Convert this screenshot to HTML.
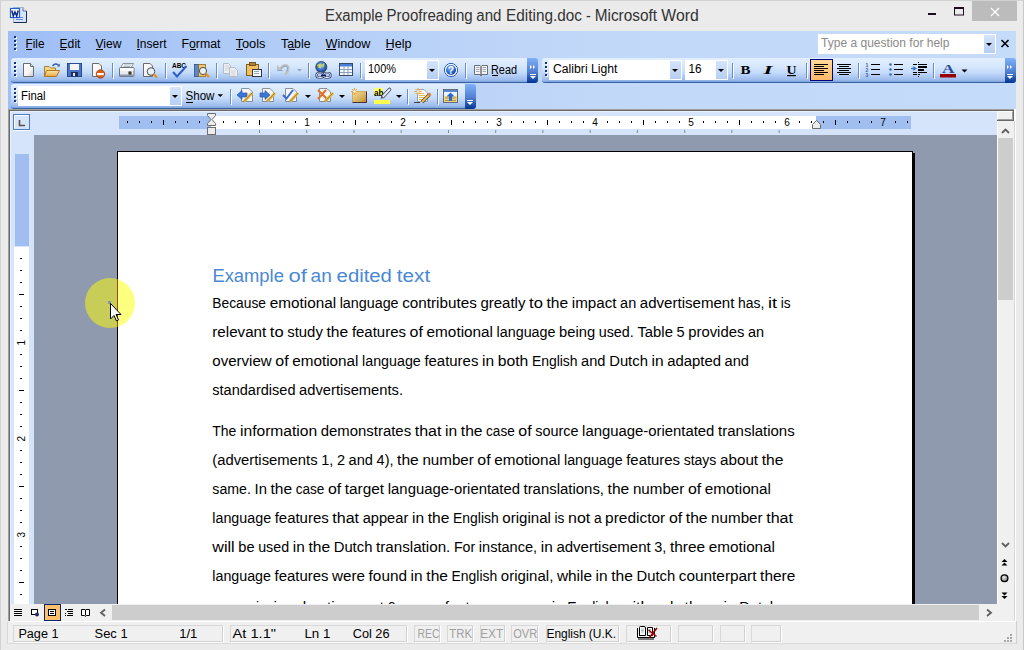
<!DOCTYPE html>
<html><head><meta charset="utf-8">
<style>
*{box-sizing:border-box}
html,body{margin:0;padding:0}
body{width:1024px;height:650px;position:relative;overflow:hidden;background:#ebebeb;font-family:"Liberation Sans",sans-serif;color:#000}
.a{position:absolute}
.tb{position:absolute;border-radius:3px 0 0 3px;background:linear-gradient(#e3efff 0%,#d6e7fd 35%,#c4dbfa 60%,#9ebdee 90%,#7ba4e0 100%);box-shadow:0 1px 0 #3b619c}
.sep{position:absolute;width:2px;height:16px;border-left:1px solid #6a8ccb;border-right:1px solid #f1f9ff}
.ovf{position:absolute;border-radius:0 3px 3px 0;background:linear-gradient(#7fb1fa,#527fd0 55%,#003591)}
.combo{position:absolute;background:#fff;border:1px solid #fff}

.arr{position:absolute;width:0;height:0;border-left:3px solid transparent;border-right:3px solid transparent;border-top:3px solid #000}
svg{position:absolute;overflow:visible}
.ui{font-family:"Liberation Sans",sans-serif;font-size:12px}
</style></head><body>
<!-- window frame -->
<div class="a" style="left:0;top:0;width:1024px;height:650px;border:1px solid #d2d2d2;border-bottom:none;border-right-color:#c8c8c8"></div>
<!-- title -->
<svg style="left:0;top:0" width="40" height="31">
 <path d="M13.5 7.5 H23 L26.5 11 V22.5 H13.5 Z" fill="#d4e4fa" stroke="#a8b8d0"/><path d="M26.5 11 V22.5 H13.5" fill="none" stroke="#1c2c58"/>
 <path d="M23 7.5 V11 H26.5" fill="#f0f0f0" stroke="#4a5a78" stroke-width="0.8"/>
 <path d="M16 17.5 H23 M16 19.5 H23" stroke="#6a8cd0" stroke-width="1"/>
 <rect x="10.5" y="8.5" width="9" height="9" fill="#fff" stroke="#2a60c8" stroke-width="1.2"/>
 <path d="M11.8 10.5 L13.3 16 L15 12 L16.7 16 L18.2 10.5" fill="none" stroke="#0c2a88" stroke-width="1.5"/>
</svg>
<svg style="left:0;top:0" width="1024" height="31">
 <g font-family="Liberation Sans" font-size="15.8" fill="#333"><text x="325.0" y="21" textLength="57.8" lengthAdjust="spacingAndGlyphs">Example</text><text x="386.5" y="21" textLength="86.2" lengthAdjust="spacingAndGlyphs">Proofreading</text><text x="476.3" y="21" textLength="25.1" lengthAdjust="spacingAndGlyphs">and</text><text x="506.1" y="21" textLength="75.8" lengthAdjust="spacingAndGlyphs">Editing.doc</text><text x="586.1" y="21" textLength="4.8" lengthAdjust="spacingAndGlyphs">-</text><text x="594.7" y="21" textLength="62.4" lengthAdjust="spacingAndGlyphs">Microsoft</text><text x="661.3" y="21" textLength="37.4" lengthAdjust="spacingAndGlyphs">Word</text></g>
 <rect x="928" y="13" width="8" height="2" fill="#1e0c1e"/>
 <rect x="954.5" y="7.5" width="9" height="7.5" fill="none" stroke="#1e0c1e" stroke-width="1"/>
 <rect x="954" y="7" width="10" height="2" fill="#1e0c1e"/>
 <rect x="972" y="1" width="45" height="20" fill="#bcbcbc"/>
 <path d="M991 8 L999 16 M999 8 L991 16" stroke="#fff" stroke-width="1.3"/>
</svg>
<!-- dock -->
<div class="a" style="left:8px;top:31px;width:1008px;height:78px;background:linear-gradient(90deg,#9ebef5 0%,#b4cef7 30%,#c2d8f9 58%,#c5dbfa 100%)"></div>
<!-- menubar -->
<svg style="left:0;top:0" width="1024" height="110"><rect x="15" y="37" width="2" height="2" fill="#fff"/><rect x="14" y="36" width="2" height="2" fill="#15307e"/><rect x="15" y="41" width="2" height="2" fill="#fff"/><rect x="14" y="40" width="2" height="2" fill="#15307e"/><rect x="15" y="45" width="2" height="2" fill="#fff"/><rect x="14" y="44" width="2" height="2" fill="#15307e"/><rect x="15" y="49" width="2" height="2" fill="#fff"/><rect x="14" y="48" width="2" height="2" fill="#15307e"/></svg>

<!-- menubar text -->
<svg style="left:0;top:0" width="1024" height="110" font-family="Liberation Sans" font-size="12.3" fill="#000">
 <text x="25.5" y="48" textLength="19" lengthAdjust="spacingAndGlyphs">File</text>
 <text x="59.5" y="48" textLength="21" lengthAdjust="spacingAndGlyphs">Edit</text>
 <text x="95.5" y="48" textLength="26" lengthAdjust="spacingAndGlyphs">View</text>
 <text x="136.5" y="48" textLength="30" lengthAdjust="spacingAndGlyphs">Insert</text>
 <text x="181.5" y="48" textLength="39" lengthAdjust="spacingAndGlyphs">Format</text>
 <text x="235.5" y="48" textLength="30" lengthAdjust="spacingAndGlyphs">Tools</text>
 <text x="281" y="48" textLength="29.5" lengthAdjust="spacingAndGlyphs">Table</text>
 <text x="325.5" y="48" textLength="45" lengthAdjust="spacingAndGlyphs">Window</text>
 <text x="385.5" y="48" textLength="26" lengthAdjust="spacingAndGlyphs">Help</text>
 <g fill="#000">
  <rect x="26" y="49" width="6" height="1"/>
  <rect x="60" y="49" width="6" height="1"/>
  <rect x="96" y="49" width="7" height="1"/>
  <rect x="137" y="49" width="3" height="1"/>
  <rect x="190" y="49" width="6" height="1"/>
  <rect x="236" y="49" width="7" height="1"/>
  <rect x="289" y="49" width="6" height="1"/>
  <rect x="326" y="49" width="10" height="1"/>
  <rect x="386" y="49" width="7" height="1"/>
 </g>
</svg>
<!-- help box -->
<div class="a" style="left:818px;top:34px;width:178px;height:20px;background:#fff"></div>
<div class="a" style="left:984px;top:35px;width:11px;height:18px;background:linear-gradient(#d4e5fc,#b4cef3)"></div>
<div class="arr" style="left:986px;top:43px;border-width:3px 3px 0 3px;border-top-color:#000"></div>
<svg style="left:0;top:0" width="1024" height="60">
 <text x="821" y="46.8" font-family="Liberation Sans" font-size="12.3" fill="#8a8a8a" textLength="128.5" lengthAdjust="spacingAndGlyphs">Type a question for help</text>
 <path d="M1001.5 40 L1008.5 47 M1008.5 40 L1001.5 47" stroke="#000" stroke-width="1.6"/>
</svg>

<!-- toolbars -->
<div class="tb" style="left:11px;top:58px;width:516px;height:24px"></div>
<div class="ovf" style="left:527px;top:58px;width:11px;height:25px"></div>
<div class="tb" style="left:542px;top:58px;width:463px;height:24px"></div>
<div class="ovf" style="left:1005px;top:58px;width:11px;height:25px"></div>
<div class="tb" style="left:11px;top:84px;width:454px;height:24px"></div>
<div class="ovf" style="left:465px;top:84px;width:11px;height:25px"></div>
<svg style="left:0;top:0" width="1024" height="110"><rect x="15" y="63" width="2" height="2" fill="#fff"/><rect x="14" y="62" width="2" height="2" fill="#15307e"/><rect x="15" y="67" width="2" height="2" fill="#fff"/><rect x="14" y="66" width="2" height="2" fill="#15307e"/><rect x="15" y="71" width="2" height="2" fill="#fff"/><rect x="14" y="70" width="2" height="2" fill="#15307e"/><rect x="15" y="75" width="2" height="2" fill="#fff"/><rect x="14" y="74" width="2" height="2" fill="#15307e"/></svg>
<svg style="left:0;top:0" width="1024" height="110"><rect x="546" y="63" width="2" height="2" fill="#fff"/><rect x="545" y="62" width="2" height="2" fill="#15307e"/><rect x="546" y="67" width="2" height="2" fill="#fff"/><rect x="545" y="66" width="2" height="2" fill="#15307e"/><rect x="546" y="71" width="2" height="2" fill="#fff"/><rect x="545" y="70" width="2" height="2" fill="#15307e"/><rect x="546" y="75" width="2" height="2" fill="#fff"/><rect x="545" y="74" width="2" height="2" fill="#15307e"/></svg>
<svg style="left:0;top:0" width="1024" height="110"><rect x="15" y="89" width="2" height="2" fill="#fff"/><rect x="14" y="88" width="2" height="2" fill="#15307e"/><rect x="15" y="93" width="2" height="2" fill="#fff"/><rect x="14" y="92" width="2" height="2" fill="#15307e"/><rect x="15" y="97" width="2" height="2" fill="#fff"/><rect x="14" y="96" width="2" height="2" fill="#15307e"/><rect x="15" y="101" width="2" height="2" fill="#fff"/><rect x="14" y="100" width="2" height="2" fill="#15307e"/></svg>

<!-- standard toolbar icons -->
<svg style="left:0;top:0" width="1024" height="110">
 <defs>
  <linearGradient id="pg" x1="0" y1="0" x2="1" y2="1"><stop offset="0" stop-color="#fff"/><stop offset="0.6" stop-color="#f4f4f4"/><stop offset="1" stop-color="#c8c8c8"/></linearGradient>
  <linearGradient id="fold" x1="0" y1="0" x2="0" y2="1"><stop offset="0" stop-color="#ffe9a0"/><stop offset="1" stop-color="#e8a64a"/></linearGradient>
  <linearGradient id="sep" x1="0" y1="0" x2="0" y2="1"><stop offset="0" stop-color="#6a8ccb" stop-opacity="0.2"/><stop offset="0.5" stop-color="#6a8ccb"/><stop offset="1" stop-color="#6a8ccb" stop-opacity="0.6"/></linearGradient>
  <radialGradient id="help" cx="0.4" cy="0.35" r="0.7"><stop offset="0" stop-color="#8ab8f8"/><stop offset="0.6" stop-color="#2a6ad0"/><stop offset="1" stop-color="#0c3c9c"/></radialGradient>
  <radialGradient id="globe" cx="0.45" cy="0.4" r="0.7"><stop offset="0" stop-color="#a8d8f8"/><stop offset="0.45" stop-color="#3a78d0"/><stop offset="1" stop-color="#1a2a58"/></radialGradient>
 </defs>
 <!-- separators row1 -->
 <g fill="#6a8ccb">
  <rect x="112" y="63" width="1" height="15"/><rect x="165" y="63" width="1" height="15"/><rect x="216" y="63" width="1" height="15"/>
  <rect x="268" y="63" width="1" height="15"/><rect x="308" y="63" width="1" height="15"/><rect x="360" y="63" width="1" height="15"/>
  <rect x="465" y="63" width="1" height="15"/>
  <rect x="732" y="63" width="1" height="15"/><rect x="806" y="63" width="1" height="15"/><rect x="858" y="63" width="1" height="15"/><rect x="933" y="63" width="1" height="15"/>
  <rect x="230" y="89" width="1" height="15"/><rect x="407" y="89" width="1" height="15"/><rect x="437" y="89" width="1" height="15"/>
 </g>
 <g fill="#fff">
  <rect x="113" y="64" width="1" height="15"/><rect x="166" y="64" width="1" height="15"/><rect x="217" y="64" width="1" height="15"/>
  <rect x="269" y="64" width="1" height="15"/><rect x="309" y="64" width="1" height="15"/><rect x="361" y="64" width="1" height="15"/>
  <rect x="466" y="64" width="1" height="15"/>
  <rect x="733" y="64" width="1" height="15"/><rect x="807" y="64" width="1" height="15"/><rect x="859" y="64" width="1" height="15"/><rect x="934" y="64" width="1" height="15"/>
  <rect x="231" y="90" width="1" height="15"/><rect x="408" y="90" width="1" height="15"/><rect x="438" y="90" width="1" height="15"/>
 </g>
 <!-- new -->
 <path d="M23.5 63.5 H30.5 L33.5 66.5 V76.5 H23.5 Z" fill="url(#pg)" stroke="#6c6c6c"/>
 <path d="M30.5 63.5 V66.5 H33.5" fill="#e0e0e0" stroke="#6c6c6c"/>
 <!-- open -->
 <path d="M44.5 66.5 H49 L50.5 68 H55.5 V76.5 H44.5 Z" fill="#f8d878" stroke="#a08040"/>
 <path d="M46.5 70.5 H59.5 L56.5 76.5 H44.5 Z" fill="url(#fold)" stroke="#b07828"/>
 <path d="M52.5 66 Q55 62.5 58.5 65" fill="none" stroke="#3a5fa8" stroke-width="1.3"/>
 <path d="M57 66.5 L60 66.5 L59.5 63.5 Z" fill="#3a5fa8"/>
 <!-- save -->
 <rect x="67.5" y="63.5" width="14" height="13" fill="#4a74c8" stroke="#2a4a98"/>
 <rect x="70" y="64" width="9" height="6" fill="#f4f4f4"/>
 <rect x="71" y="72" width="7" height="4.5" fill="#1c2c58"/>
 <rect x="73" y="73" width="2" height="3" fill="#e8e8e8"/>
 <!-- permission -->
 <path d="M92.5 63.5 H99 L101.5 66 V76.5 H92.5 Z" fill="url(#pg)" stroke="#6c6c6c"/>
 <circle cx="100.5" cy="74" r="4.2" fill="#d86018" stroke="#9c3c10" stroke-width="0.8"/>
 <rect x="97.2" y="73" width="6.6" height="2.2" fill="#fff"/>
 <!-- print -->
 <path d="M123 63.5 H133.5 L131 68 H120.5 Z" fill="#f4f6f8" stroke="#808890" stroke-width="0.9"/>
 <path d="M124 65 H131 M123.2 66.5 H130" stroke="#a8b0b8" stroke-width="0.8"/>
 <path d="M119.5 68.5 Q119.5 67.5 120.5 67.5 H133 Q134 67.5 134 68.5 V76 Q134 76.5 133.5 76.5 H120 Q119.5 76.5 119.5 76 Z" fill="#e8ecf0" stroke="#606870" stroke-width="0.9"/>
 <rect x="120" y="68" width="13.5" height="3" fill="#fafcfe"/>
 <rect x="120" y="74.5" width="13.5" height="1.8" fill="#8a98b0"/>
 <rect x="128.5" y="71.5" width="3" height="3" fill="#181818"/>
 <rect x="129.5" y="72.5" width="1" height="1" fill="#f0a000"/>
 <!-- print preview -->
 <path d="M143.5 63.5 H150 L152.5 66 V76.5 H143.5 Z" fill="url(#pg)" stroke="#6c6c6c"/>
 <circle cx="151" cy="71.5" r="3.8" fill="#e8f0f8" stroke="#505050" stroke-width="1"/>
 <path d="M153.5 74 L157 77.5" stroke="#e88c20" stroke-width="2.2"/>
 <!-- spelling -->
 <text x="172" y="68" font-family="Liberation Sans" font-weight="bold" font-size="7" fill="#000" textLength="14" lengthAdjust="spacingAndGlyphs">ABC</text>
 <path d="M173 72 L177 76.5 L186.5 66" fill="none" stroke="#2f5ec8" stroke-width="2"/>
 <!-- research -->
 <rect x="194.5" y="64.5" width="4" height="12" fill="#5a86d0" stroke="#304f8c" stroke-width="0.8"/>
 <rect x="198.5" y="64.5" width="7" height="12" fill="#f0c870" stroke="#8a6828" stroke-width="0.8"/>
 <circle cx="203" cy="71" r="3.6" fill="#e8f0f8" stroke="#505050" stroke-width="1"/>
 <path d="M205.5 73.5 L209 77" stroke="#e88c20" stroke-width="2.2"/>
 <!-- copy disabled -->
 <path d="M223.5 63.5 H228.5 L230.5 65.5 V73.5 H223.5 Z" fill="#eef0f2" stroke="#b4bcc4"/>
 <path d="M229.5 67.5 H234.5 L237.5 70.5 V76.5 H229.5 Z" fill="#eef0f2" stroke="#b4bcc4"/>
 <path d="M225 66 H229 M225 68 H229 M225 70 H228 M231 71 H235.5 M231 73 H235.5 M231 75 H235.5" stroke="#c4ccd4" stroke-width="0.8"/>
 <!-- paste -->
 <rect x="246.5" y="64.5" width="12" height="11" fill="#f0c060" stroke="#806020"/>
 <rect x="249.5" y="62.5" width="6" height="3" fill="#b08030" stroke="#604010" stroke-width="0.8"/>
 <rect x="252.5" y="69.5" width="9" height="7" fill="#f4f6f8" stroke="#303848"/>
 <path d="M254 71.5 H259 M254 73.5 H259" stroke="#8aa0b8" stroke-width="0.9"/>
 <!-- undo disabled -->
 <path d="M280 69.5 Q283 64.5 286.5 65.5 Q289.5 67 287.5 71.5 L285 75" fill="none" stroke="#c0c4bc" stroke-width="2.6"/>
 <path d="M280 69.5 Q283 65.5 286.5 66 Q288.5 67.5 286.8 71.5" fill="none" stroke="#88a4cc" stroke-width="1"/>
 <path d="M277 65 V71 H283 Z" fill="#bcc4bc"/><path d="M277.5 70.5 H282.5" stroke="#88a4cc" stroke-width="1"/>
 <path d="M297 69 H302 L299.5 71.5 Z" fill="#9aa4b4"/>
 <!-- hyperlink -->
 <circle cx="321.3" cy="67" r="5.6" fill="url(#globe)" stroke="#283850" stroke-width="0.7"/>
 <path d="M317.5 65.5 L320 64.5 L319 67 L321 67.5 M322 64.5 L323 66 L324 63.5" stroke="#e8d830" stroke-width="1.3" fill="none"/>
 <rect x="316.5" y="73" width="7" height="4.5" rx="2.2" fill="none" stroke="#203060" stroke-width="2.2"/>
 <rect x="316.5" y="73" width="7" height="4.5" rx="2.2" fill="none" stroke="#e8eef4" stroke-width="1"/>
 <rect x="323.5" y="73" width="7" height="4.5" rx="2.2" fill="none" stroke="#203060" stroke-width="2.2"/>
 <rect x="323.5" y="73" width="7" height="4.5" rx="2.2" fill="none" stroke="#e8eef4" stroke-width="1"/>
 <rect x="321" y="74.6" width="5" height="1.5" fill="#101860"/>
 <!-- table -->
 <rect x="339.5" y="63.5" width="13" height="12" fill="#f8fafc" stroke="#3a4a64"/>
 <rect x="340" y="64" width="12" height="2.5" fill="#4a80d8"/>
 <path d="M344 66 V75 M348 66 V75 M340 69.5 H352 M340 72.5 H352" stroke="#8aa0c0" stroke-width="1"/>
 <!-- help -->
 <circle cx="451" cy="70" r="6.6" fill="#fff" stroke="#2a5cc0" stroke-width="1"/>
 <circle cx="451" cy="70" r="5" fill="url(#help)"/>
 <text x="447.8" y="74.3" font-family="Liberation Sans" font-weight="bold" font-size="10.5" fill="#fff">?</text>
 <!-- read -->
 <path d="M474.5 65.5 H480 L481 66.5 L482 65.5 H487.5 V74.5 H482 L481 75.5 L480 74.5 H474.5 Z" fill="#f2f4f4" stroke="#5c6470" stroke-width="0.9"/>
 <path d="M481 66.5 V76" stroke="#303848" stroke-width="1"/>
 <path d="M476 67.5 H479.5 M476 69.5 H479.5 M476 71.5 H479.5 M482.5 67.5 H486 M482.5 69.5 H486 M482.5 71.5 H486" stroke="#98a4b0" stroke-width="0.9"/>
 <text x="491" y="73.5" font-family="Liberation Sans" font-size="12.3" fill="#000" textLength="26" lengthAdjust="spacingAndGlyphs">Read</text>
 <rect x="492" y="75" width="6" height="1" fill="#000"/>
</svg>
<!-- zoom combo -->
<div class="a" style="left:365px;top:60px;width:74px;height:20px;background:#fff"></div>
<div class="a" style="left:427px;top:61px;width:11px;height:18px;background:linear-gradient(#d4e5fc,#b4cef3)"></div>
<div class="arr" style="left:429px;top:69px;border-width:3px 3px 0 3px"></div>
<svg style="left:0;top:0" width="1024" height="110"><text x="368" y="72.5" font-family="Liberation Sans" font-size="12.3" fill="#000" textLength="28" lengthAdjust="spacingAndGlyphs">100%</text></svg>

<!-- formatting toolbar -->
<div class="a" style="left:549px;top:60px;width:133px;height:20px;background:#fff"></div>
<div class="a" style="left:670px;top:61px;width:11px;height:18px;background:linear-gradient(#d4e5fc,#b4cef3)"></div>
<div class="arr" style="left:672px;top:69px;border-width:3px 3px 0 3px"></div>
<div class="a" style="left:685px;top:60px;width:43px;height:20px;background:#fff"></div>
<div class="a" style="left:716px;top:61px;width:11px;height:18px;background:linear-gradient(#d4e5fc,#b4cef3)"></div>
<div class="arr" style="left:718px;top:69px;border-width:3px 3px 0 3px"></div>
<div class="a" style="left:810px;top:59px;width:23px;height:22px;border:1px solid #000080;background:linear-gradient(#ffd898,#ffb868)"></div>
<svg style="left:0;top:0" width="1024" height="110">
 <text x="553" y="72.5" font-family="Liberation Sans" font-size="12.3" fill="#000" textLength="64.5" lengthAdjust="spacingAndGlyphs">Calibri Light</text>
 <text x="688.5" y="72.5" font-family="Liberation Sans" font-size="12.3" fill="#000" textLength="13" lengthAdjust="spacingAndGlyphs">16</text>
 <text x="740.5" y="74" font-family="Liberation Serif" font-weight="bold" font-size="12.5" fill="#000" textLength="10" lengthAdjust="spacingAndGlyphs">B</text>
 <text x="763.5" y="74" font-family="Liberation Serif" font-style="italic" font-weight="bold" font-size="12.5" fill="#000" textLength="9" lengthAdjust="spacingAndGlyphs">I</text>
 <text x="786.5" y="73.5" font-family="Liberation Serif" font-weight="bold" font-size="12" fill="#000" textLength="10" lengthAdjust="spacingAndGlyphs">U</text>
 <rect x="787" y="75" width="9" height="1.2" fill="#000"/>
 <g fill="#000">
  <rect x="814" y="64" width="14" height="1"/><rect x="814" y="66" width="10" height="1"/><rect x="814" y="68" width="14" height="1"/><rect x="814" y="70" width="10" height="1"/><rect x="814" y="72" width="14" height="1"/><rect x="814" y="74" width="10" height="1"/>
  <rect x="837" y="64" width="14" height="1"/><rect x="839" y="66" width="10" height="1"/><rect x="837" y="68" width="14" height="1"/><rect x="839" y="70" width="10" height="1"/><rect x="837" y="72" width="14" height="1"/><rect x="839" y="74" width="10" height="1"/>
  <rect x="871" y="64" width="9" height="1"/><rect x="871" y="69" width="9" height="1"/><rect x="871" y="74" width="9" height="1"/>
  <rect x="894" y="64" width="9" height="1"/><rect x="894" y="69" width="9" height="1"/><rect x="894" y="74" width="9" height="1"/>
  <rect x="918" y="62" width="1" height="1"/><rect x="918" y="76" width="1" height="1"/><rect x="913" y="64" width="4" height="1"/><rect x="918" y="64" width="9" height="1"/><rect x="918" y="66" width="9" height="2"/><rect x="918" y="69" width="6" height="2"/><rect x="913" y="72" width="4" height="1"/><rect x="918" y="72" width="9" height="1"/><rect x="913" y="74" width="4" height="1"/><rect x="918" y="74" width="2" height="1"/>
 </g>
 <g font-family="Liberation Sans" font-size="5" fill="#3a5ca8" font-weight="bold"><text x="865.5" y="66.5">1</text><text x="865.5" y="71.5">2</text><text x="865.5" y="76.5">3</text></g>
 <g fill="#3a6ab8"><circle cx="890.5" cy="64.5" r="1.3"/><circle cx="890.5" cy="69.5" r="1.3"/><circle cx="890.5" cy="74.5" r="1.3"/></g>
 <path d="M911 68.5 H914" stroke="#3a78d0" stroke-width="1.4"/><path d="M912.5 66 L917 68.5 L912.5 71 L914 68.5 Z" fill="#2a60c0"/>
 <text x="942" y="73" font-family="Liberation Serif" font-weight="bold" font-size="13" fill="#2a4c9c" textLength="12.5" lengthAdjust="spacingAndGlyphs">A</text>
 <rect x="940" y="74" width="16" height="3.5" fill="#980000"/>
 <path d="M961.5 69.5 H967.5 L964.5 72.5 Z" fill="#000"/>
</svg>
<div class="a" style="left:1006px;top:61px;width:8px;height:20px">
 <svg width="8" height="20" style="left:0;top:0"><path d="M1 4 L3 6 L1 8 Z M4 4 L6 6 L4 8 Z" fill="#fff"/><rect x="1" y="13" width="6" height="1" fill="#fff"/><path d="M1 15 H7 L4 18 Z" fill="#fff"/></svg>
</div>

<!-- reviewing toolbar -->
<div class="a" style="left:18px;top:86px;width:164px;height:20px;background:#fff"></div>
<div class="a" style="left:170px;top:87px;width:11px;height:18px;background:linear-gradient(#d4e5fc,#b4cef3)"></div>
<div class="arr" style="left:172px;top:95px;border-width:3px 3px 0 3px"></div>
<svg style="left:0;top:0" width="1024" height="110">
 <defs>
  <linearGradient id="gold" x1="0" y1="0" x2="1" y2="1"><stop offset="0" stop-color="#f8e0a0"/><stop offset="1" stop-color="#c09030"/></linearGradient>
 </defs>
 <text x="21" y="100.4" font-family="Liberation Sans" font-size="12.3" fill="#000" textLength="24.5" lengthAdjust="spacingAndGlyphs">Final</text>
 <text x="185.5" y="100.4" font-family="Liberation Sans" font-size="12.3" fill="#000" textLength="29" lengthAdjust="spacingAndGlyphs">Show</text>
 <rect x="186" y="102" width="7" height="1" fill="#000"/>
 <path d="M217.5 94.2 H223 L220.25 97 Z" fill="#000"/>
 <!-- prev/next/accept/reject -->
 <g>
  <path d="M241.5 88.5 H249 L252.5 92 V101.5 H241.5 Z" fill="#f4f6f8" stroke="#707880" stroke-width="0.8"/>
  <path d="M237 95 L242 90.5 V93 H247 V97 H242 V99.5 Z" fill="#3a78d8" stroke="#1c4c9c" stroke-width="0.6"/>
  <path d="M252 93 L244 101.5" stroke="#e8b848" stroke-width="3"/><path d="M252 93 L244 101.5" stroke="#806020" stroke-width="0.6"/>
  <path d="M262.5 88.5 H270 L273.5 92 V101.5 H262.5 Z" fill="#f4f6f8" stroke="#707880" stroke-width="0.8"/>
  <path d="M270 95 L265 90.5 V93 H260 V97 H265 V99.5 Z" fill="#3a78d8" stroke="#1c4c9c" stroke-width="0.6"/>
  <path d="M275 93 L267 101.5" stroke="#e8b848" stroke-width="3"/><path d="M275 93 L267 101.5" stroke="#806020" stroke-width="0.6"/>
  <path d="M285.5 88.5 H293 L296.5 92 V101.5 H285.5 Z" fill="#f4f6f8" stroke="#707880" stroke-width="0.8"/>
  <path d="M283 95 L286.5 98.5 L293 90" fill="none" stroke="#3a6ad0" stroke-width="2"/>
  <path d="M298 93 L290 101.5" stroke="#e8b848" stroke-width="3"/><path d="M298 93 L290 101.5" stroke="#806020" stroke-width="0.6"/>
  <path d="M305 95 H311 L308 98 Z" fill="#000"/>
  <path d="M319.5 88.5 H327 L330.5 92 V101.5 H319.5 Z" fill="#f4f6f8" stroke="#707880" stroke-width="0.8"/>
  <path d="M318 90 L327 99 M326 90 L318 99" stroke="#e07028" stroke-width="2"/>
  <path d="M333 93 L325 101.5" stroke="#e8b848" stroke-width="3"/><path d="M333 93 L325 101.5" stroke="#806020" stroke-width="0.6"/>
  <path d="M339 95 H345 L342 98 Z" fill="#000"/>
 </g>
 <!-- new comment -->
 <path d="M352.5 91.5 H366.5 V102.5 H352.5 Z" fill="url(#gold)" stroke="#c8a058" stroke-width="0.8"/>
 <path d="M366.5 91.5 V102.5 H352.5" fill="none" stroke="#403040" stroke-width="1"/>
 <path d="M363 102 L366 99 V102 Z" fill="#e08020"/>
 <path d="M354.5 88 V95 M351 91.5 H358 M352 89 L357 94 M357 89 L352 94" stroke="#f0a030" stroke-width="1"/>
 <circle cx="354.5" cy="91.5" r="1.3" fill="#fff"/>
 <!-- highlight -->
 <rect x="374" y="88" width="9" height="7" fill="#ffff60"/>
 <text x="374" y="95.5" font-family="Liberation Sans" font-weight="bold" font-size="9.5" fill="#000" textLength="9.5" lengthAdjust="spacingAndGlyphs">ab</text>
 <path d="M389.5 89.5 L383 96.5" stroke="#404858" stroke-width="3.6" stroke-linecap="round"/><path d="M389.5 89.5 L383 96.5" stroke="#e8eef8" stroke-width="2" stroke-linecap="round"/><path d="M382.5 96.5 L381 98.5" stroke="#404040" stroke-width="1.2"/>
 <rect x="374" y="100" width="16" height="4" fill="#ffff50"/>
 <path d="M396 95 H402 L399 98 Z" fill="#000"/>
 <!-- track changes -->
 <path d="M417.5 89.5 H424 L427.5 93 V101.5 H417.5 Z" fill="#fbfbf6" stroke="#8090a8" stroke-width="0.8"/>
 <path d="M419 93.5 H424 M419 95.5 H425 M419 97.5 H424 M419 99.5 H423" stroke="#e0b050" stroke-width="0.9"/>
 <path d="M418 88 V95 M414.5 91.5 H421.5 M415.5 89 L420.5 94 M420.5 89 L415.5 94" stroke="#f0a030" stroke-width="1"/>
 <circle cx="418" cy="91.5" r="1.2" fill="#fff"/>
 <path d="M429.5 94.5 L422 102" stroke="#404040" stroke-width="3.4"/><path d="M429.5 94.5 L422 102" stroke="#f0c048" stroke-width="2"/>
 <path d="M430.5 93.5 L428.5 95.5" stroke="#d88040" stroke-width="2.5"/>
 <rect x="414" y="102" width="6" height="1" fill="#404040"/>
 <!-- reviewing pane -->
 <rect x="443.5" y="89.5" width="14" height="13" fill="#f0d888" stroke="#405070" stroke-width="0.8"/>
 <rect x="444" y="90" width="13" height="2" fill="#5a88d0"/>
 <rect x="444" y="92" width="13" height="4" fill="#eef4fc"/>
 <path d="M445 98 H456 M445 100.5 H456" stroke="#b08828" stroke-width="0.9"/>
 <path d="M450.5 92.5 L454.5 96.5 H452 V101 H449 V96.5 H446.5 Z" fill="#2a68d0"/>
</svg>
<div class="a" style="left:466px;top:87px;width:8px;height:20px">
 <svg width="8" height="20" style="left:0;top:0"><rect x="1" y="13" width="6" height="1" fill="#fff"/><path d="M1 15 H7 L4 18 Z" fill="#fff"/></svg>
</div>
<div class="a" style="left:529px;top:61px;width:8px;height:20px">
 <svg width="8" height="20" style="left:0;top:0"><path d="M1 4 L3 6 L1 8 Z M4 4 L6 6 L4 8 Z" fill="#fff"/><rect x="1" y="13" width="6" height="1" fill="#fff"/><path d="M1 15 H7 L4 18 Z" fill="#fff"/></svg>
</div>

<!-- doc window -->
<div class="a" style="left:8px;top:109px;width:1008px;height:512px;border-top:1px solid #a0a0a0;border-left:1px solid #a0a0a0"></div>
<div class="a" style="left:9px;top:110px;width:1007px;height:511px;border-top:1px solid #696969;border-left:1px solid #696969;background:#d5e4fb"></div>
<div class="a" style="left:10px;top:111px;width:987px;height:1px;background:#e8f0fc"></div>
<div class="a" style="left:10px;top:111px;width:1px;height:493px;background:#e8f0fc"></div>

<!-- rulers -->
<div class="a" style="left:119px;top:116px;width:92px;height:13px;background:#a0bef0"></div>
<div class="a" style="left:211px;top:116px;width:605px;height:13px;background:#fff"></div>
<div class="a" style="left:816px;top:116px;width:95px;height:13px;background:#a0bef0"></div>
<div class="a" style="left:15px;top:154px;width:14px;height:92px;background:#a0bef0"></div>
<div class="a" style="left:14px;top:247px;width:15px;height:357px;background:#fff"></div>
<svg style="left:0;top:0" width="1024" height="650">
<rect x="127" y="121" width="1" height="2" fill="#000"/>
<rect x="139" y="121" width="1" height="2" fill="#000"/>
<rect x="151" y="121" width="1" height="2" fill="#000"/>
<rect x="163" y="120" width="1" height="5" fill="#000"/>
<rect x="175" y="121" width="1" height="2" fill="#000"/>
<rect x="187" y="121" width="1" height="2" fill="#000"/>
<rect x="199" y="121" width="1" height="2" fill="#000"/>
<rect x="223" y="121" width="1" height="2" fill="#000"/>
<rect x="235" y="121" width="1" height="2" fill="#000"/>
<rect x="247" y="121" width="1" height="2" fill="#000"/>
<rect x="259" y="120" width="1" height="5" fill="#000"/>
<rect x="271" y="121" width="1" height="2" fill="#000"/>
<rect x="283" y="121" width="1" height="2" fill="#000"/>
<rect x="295" y="121" width="1" height="2" fill="#000"/>
<text x="307" y="125.5" font-family="Liberation Sans" font-size="10" fill="#000" text-anchor="middle">1</text>
<rect x="319" y="121" width="1" height="2" fill="#000"/>
<rect x="331" y="121" width="1" height="2" fill="#000"/>
<rect x="343" y="121" width="1" height="2" fill="#000"/>
<rect x="355" y="120" width="1" height="5" fill="#000"/>
<rect x="367" y="121" width="1" height="2" fill="#000"/>
<rect x="379" y="121" width="1" height="2" fill="#000"/>
<rect x="391" y="121" width="1" height="2" fill="#000"/>
<text x="403" y="125.5" font-family="Liberation Sans" font-size="10" fill="#000" text-anchor="middle">2</text>
<rect x="415" y="121" width="1" height="2" fill="#000"/>
<rect x="427" y="121" width="1" height="2" fill="#000"/>
<rect x="439" y="121" width="1" height="2" fill="#000"/>
<rect x="451" y="120" width="1" height="5" fill="#000"/>
<rect x="463" y="121" width="1" height="2" fill="#000"/>
<rect x="475" y="121" width="1" height="2" fill="#000"/>
<rect x="487" y="121" width="1" height="2" fill="#000"/>
<text x="499" y="125.5" font-family="Liberation Sans" font-size="10" fill="#000" text-anchor="middle">3</text>
<rect x="511" y="121" width="1" height="2" fill="#000"/>
<rect x="523" y="121" width="1" height="2" fill="#000"/>
<rect x="535" y="121" width="1" height="2" fill="#000"/>
<rect x="547" y="120" width="1" height="5" fill="#000"/>
<rect x="559" y="121" width="1" height="2" fill="#000"/>
<rect x="571" y="121" width="1" height="2" fill="#000"/>
<rect x="583" y="121" width="1" height="2" fill="#000"/>
<text x="595" y="125.5" font-family="Liberation Sans" font-size="10" fill="#000" text-anchor="middle">4</text>
<rect x="607" y="121" width="1" height="2" fill="#000"/>
<rect x="619" y="121" width="1" height="2" fill="#000"/>
<rect x="631" y="121" width="1" height="2" fill="#000"/>
<rect x="643" y="120" width="1" height="5" fill="#000"/>
<rect x="655" y="121" width="1" height="2" fill="#000"/>
<rect x="667" y="121" width="1" height="2" fill="#000"/>
<rect x="679" y="121" width="1" height="2" fill="#000"/>
<text x="691" y="125.5" font-family="Liberation Sans" font-size="10" fill="#000" text-anchor="middle">5</text>
<rect x="703" y="121" width="1" height="2" fill="#000"/>
<rect x="715" y="121" width="1" height="2" fill="#000"/>
<rect x="727" y="121" width="1" height="2" fill="#000"/>
<rect x="739" y="120" width="1" height="5" fill="#000"/>
<rect x="751" y="121" width="1" height="2" fill="#000"/>
<rect x="763" y="121" width="1" height="2" fill="#000"/>
<rect x="775" y="121" width="1" height="2" fill="#000"/>
<text x="787" y="125.5" font-family="Liberation Sans" font-size="10" fill="#000" text-anchor="middle">6</text>
<rect x="799" y="121" width="1" height="2" fill="#000"/>
<rect x="811" y="121" width="1" height="2" fill="#000"/>
<rect x="823" y="121" width="1" height="2" fill="#000"/>
<rect x="835" y="120" width="1" height="5" fill="#000"/>
<rect x="847" y="121" width="1" height="2" fill="#000"/>
<rect x="859" y="121" width="1" height="2" fill="#000"/>
<rect x="871" y="121" width="1" height="2" fill="#000"/>
<text x="883" y="125.5" font-family="Liberation Sans" font-size="10" fill="#000" text-anchor="middle">7</text>
<rect x="259.0" y="130" width="1" height="3" fill="#8a8a8a"/>
<rect x="306.2" y="130" width="1" height="3" fill="#8a8a8a"/>
<rect x="353.5" y="130" width="1" height="3" fill="#8a8a8a"/>
<rect x="400.7" y="130" width="1" height="3" fill="#8a8a8a"/>
<rect x="448.0" y="130" width="1" height="3" fill="#8a8a8a"/>
<rect x="495.2" y="130" width="1" height="3" fill="#8a8a8a"/>
<rect x="542.4" y="130" width="1" height="3" fill="#8a8a8a"/>
<rect x="589.7" y="130" width="1" height="3" fill="#8a8a8a"/>
<rect x="636.9" y="130" width="1" height="3" fill="#8a8a8a"/>
<rect x="684.2" y="130" width="1" height="3" fill="#8a8a8a"/>
<rect x="731.4" y="130" width="1" height="3" fill="#8a8a8a"/>
<rect x="778.6" y="130" width="1" height="3" fill="#8a8a8a"/>
<path d="M207.5 113.5 H215.5 V115.5 L212 119.5 L215.5 123.5 V125.5 H207.5 V123.5 L211 119.5 L207.5 115.5 Z" fill="#ececec" stroke="#6e6e6e"/>
<rect x="207.5" y="127.5" width="8" height="7" fill="#ececec" stroke="#6e6e6e"/>
<rect x="895" y="121" width="1" height="2" fill="#000"/><rect x="907" y="121" width="1" height="2" fill="#000"/>
<path d="M812.5 128.5 V124.5 L816.5 120.5 L820.5 124.5 V128.5 Z" fill="#ececec" stroke="#6e6e6e"/>
<rect x="13.5" y="114.5" width="16" height="15" fill="#d6e4f9" stroke="#4a7cc8"/><path d="M14.5 128.5 V115.5 H28.5" fill="none" stroke="#fff"/>
<rect x="13" y="130" width="17" height="1" fill="#fff"/>
<path d="M19.5 120 V125.5 H25" fill="none" stroke="#5a5048" stroke-width="1.6"/>
<rect x="20" y="258" width="2" height="1" fill="#000"/>
<rect x="20" y="270" width="2" height="1" fill="#000"/>
<rect x="20" y="282" width="2" height="1" fill="#000"/>
<rect x="19" y="294" width="5" height="1" fill="#000"/>
<rect x="20" y="306" width="2" height="1" fill="#000"/>
<rect x="20" y="318" width="2" height="1" fill="#000"/>
<rect x="20" y="330" width="2" height="1" fill="#000"/>
<text x="0" y="0" font-family="Liberation Sans" font-size="10" fill="#000" text-anchor="middle" transform="translate(25.2 342.6) rotate(-90)">1</text>
<rect x="20" y="354" width="2" height="1" fill="#000"/>
<rect x="20" y="366" width="2" height="1" fill="#000"/>
<rect x="20" y="378" width="2" height="1" fill="#000"/>
<rect x="19" y="390" width="5" height="1" fill="#000"/>
<rect x="20" y="402" width="2" height="1" fill="#000"/>
<rect x="20" y="414" width="2" height="1" fill="#000"/>
<rect x="20" y="426" width="2" height="1" fill="#000"/>
<text x="0" y="0" font-family="Liberation Sans" font-size="10" fill="#000" text-anchor="middle" transform="translate(25.2 438.6) rotate(-90)">2</text>
<rect x="20" y="450" width="2" height="1" fill="#000"/>
<rect x="20" y="462" width="2" height="1" fill="#000"/>
<rect x="20" y="474" width="2" height="1" fill="#000"/>
<rect x="19" y="486" width="5" height="1" fill="#000"/>
<rect x="20" y="498" width="2" height="1" fill="#000"/>
<rect x="20" y="510" width="2" height="1" fill="#000"/>
<rect x="20" y="522" width="2" height="1" fill="#000"/>
<text x="0" y="0" font-family="Liberation Sans" font-size="10" fill="#000" text-anchor="middle" transform="translate(25.2 534.6) rotate(-90)">3</text>
<rect x="20" y="546" width="2" height="1" fill="#000"/>
<rect x="20" y="558" width="2" height="1" fill="#000"/>
<rect x="20" y="570" width="2" height="1" fill="#000"/>
<rect x="19" y="582" width="5" height="1" fill="#000"/>
<rect x="20" y="594" width="2" height="1" fill="#000"/>
</svg>
<!-- gray workspace -->
<div class="a" style="left:34px;top:135px;width:963px;height:469px;background:#909aae"></div>
<!-- page -->
<div class="a" style="left:117px;top:151px;width:796px;height:460px;background:#fff;border-left:1px solid #000;border-top:1px solid #000;border-right:1px solid #000"></div>
<div class="a" style="left:913px;top:153px;width:2px;height:451px;background:#000"></div>


<!-- document text -->
<div class="a" style="left:0;top:0;width:1024px;height:604px;overflow:hidden"><svg style="left:0;top:0" width="1024" height="604" font-family="Liberation Sans" font-size="14" fill="#000">
<g font-size="18.7" fill="#4a88d4"><text x="212.4" y="282" textLength="71.5" lengthAdjust="spacingAndGlyphs">Example</text><text x="288.6" y="282" textLength="18.4" lengthAdjust="spacingAndGlyphs">of</text><text x="310.6" y="282" textLength="21.2" lengthAdjust="spacingAndGlyphs">an</text><text x="336.6" y="282" textLength="55.3" lengthAdjust="spacingAndGlyphs">edited</text><text x="396.8" y="282" textLength="33.4" lengthAdjust="spacingAndGlyphs">text</text></g>
<text x="212.3" y="308" textLength="53.7" lengthAdjust="spacingAndGlyphs">Because</text>
<text x="269.7" y="308" textLength="66.4" lengthAdjust="spacingAndGlyphs">emotional</text>
<text x="339.7" y="308" textLength="58.9" lengthAdjust="spacingAndGlyphs">language</text>
<text x="402.2" y="308" textLength="74.6" lengthAdjust="spacingAndGlyphs">contributes</text>
<text x="480.4" y="308" textLength="45.0" lengthAdjust="spacingAndGlyphs">greatly</text>
<text x="529.1" y="308" textLength="13.8" lengthAdjust="spacingAndGlyphs">to</text>
<text x="546.5" y="308" textLength="21.7" lengthAdjust="spacingAndGlyphs">the</text>
<text x="571.8" y="308" textLength="44.7" lengthAdjust="spacingAndGlyphs">impact</text>
<text x="620.1" y="308" textLength="16.1" lengthAdjust="spacingAndGlyphs">an</text>
<text x="639.8" y="308" textLength="94.6" lengthAdjust="spacingAndGlyphs">advertisement</text>
<text x="738.1" y="308" textLength="26.3" lengthAdjust="spacingAndGlyphs">has,</text>
<text x="768.0" y="308" textLength="9.0" lengthAdjust="spacingAndGlyphs">it</text>
<text x="780.7" y="308" textLength="9.9" lengthAdjust="spacingAndGlyphs">is</text>
<text x="212.3" y="337" textLength="53.9" lengthAdjust="spacingAndGlyphs">relevant</text>
<text x="269.8" y="337" textLength="13.8" lengthAdjust="spacingAndGlyphs">to</text>
<text x="287.2" y="337" textLength="35.7" lengthAdjust="spacingAndGlyphs">study</text>
<text x="326.5" y="337" textLength="21.7" lengthAdjust="spacingAndGlyphs">the</text>
<text x="351.9" y="337" textLength="54.1" lengthAdjust="spacingAndGlyphs">features</text>
<text x="409.6" y="337" textLength="13.3" lengthAdjust="spacingAndGlyphs">of</text>
<text x="426.6" y="337" textLength="66.4" lengthAdjust="spacingAndGlyphs">emotional</text>
<text x="496.6" y="337" textLength="58.9" lengthAdjust="spacingAndGlyphs">language</text>
<text x="559.1" y="337" textLength="36.0" lengthAdjust="spacingAndGlyphs">being</text>
<text x="598.7" y="337" textLength="35.1" lengthAdjust="spacingAndGlyphs">used.</text>
<text x="637.4" y="337" textLength="35.5" lengthAdjust="spacingAndGlyphs">Table</text>
<text x="676.6" y="337" textLength="8.1" lengthAdjust="spacingAndGlyphs">5</text>
<text x="688.3" y="337" textLength="56.0" lengthAdjust="spacingAndGlyphs">provides</text>
<text x="747.9" y="337" textLength="16.1" lengthAdjust="spacingAndGlyphs">an</text>
<text x="212.3" y="366" textLength="59.4" lengthAdjust="spacingAndGlyphs">overview</text>
<text x="275.3" y="366" textLength="13.3" lengthAdjust="spacingAndGlyphs">of</text>
<text x="292.2" y="366" textLength="66.3" lengthAdjust="spacingAndGlyphs">emotional</text>
<text x="362.1" y="366" textLength="58.7" lengthAdjust="spacingAndGlyphs">language</text>
<text x="424.4" y="366" textLength="54.0" lengthAdjust="spacingAndGlyphs">features</text>
<text x="482.0" y="366" textLength="12.1" lengthAdjust="spacingAndGlyphs">in</text>
<text x="497.7" y="366" textLength="30.6" lengthAdjust="spacingAndGlyphs">both</text>
<text x="531.9" y="366" textLength="45.7" lengthAdjust="spacingAndGlyphs">English</text>
<text x="581.1" y="366" textLength="24.4" lengthAdjust="spacingAndGlyphs">and</text>
<text x="609.2" y="366" textLength="38.7" lengthAdjust="spacingAndGlyphs">Dutch</text>
<text x="651.5" y="366" textLength="12.1" lengthAdjust="spacingAndGlyphs">in</text>
<text x="667.2" y="366" textLength="53.8" lengthAdjust="spacingAndGlyphs">adapted</text>
<text x="724.6" y="366" textLength="24.4" lengthAdjust="spacingAndGlyphs">and</text>
<text x="212.3" y="394.5" textLength="83.2" lengthAdjust="spacingAndGlyphs">standardised</text>
<text x="299.1" y="394.5" textLength="103.9" lengthAdjust="spacingAndGlyphs">advertisements.</text>
<text x="212.3" y="435.5" textLength="24.1" lengthAdjust="spacingAndGlyphs">The</text>
<text x="240.0" y="435.5" textLength="77.2" lengthAdjust="spacingAndGlyphs">information</text>
<text x="320.8" y="435.5" textLength="90.3" lengthAdjust="spacingAndGlyphs">demonstrates</text>
<text x="414.7" y="435.5" textLength="26.7" lengthAdjust="spacingAndGlyphs">that</text>
<text x="445.1" y="435.5" textLength="12.1" lengthAdjust="spacingAndGlyphs">in</text>
<text x="460.8" y="435.5" textLength="21.7" lengthAdjust="spacingAndGlyphs">the</text>
<text x="486.1" y="435.5" textLength="28.6" lengthAdjust="spacingAndGlyphs">case</text>
<text x="518.3" y="435.5" textLength="13.3" lengthAdjust="spacingAndGlyphs">of</text>
<text x="535.2" y="435.5" textLength="43.3" lengthAdjust="spacingAndGlyphs">source</text>
<text x="582.1" y="435.5" textLength="132.3" lengthAdjust="spacingAndGlyphs">language-orientated</text>
<text x="718.1" y="435.5" textLength="76.6" lengthAdjust="spacingAndGlyphs">translations</text>
<text x="212.3" y="464.6" textLength="105.3" lengthAdjust="spacingAndGlyphs">(advertisements</text>
<text x="321.3" y="464.6" textLength="12.1" lengthAdjust="spacingAndGlyphs">1,</text>
<text x="336.9" y="464.6" textLength="8.1" lengthAdjust="spacingAndGlyphs">2</text>
<text x="348.6" y="464.6" textLength="24.4" lengthAdjust="spacingAndGlyphs">and</text>
<text x="376.6" y="464.6" textLength="16.9" lengthAdjust="spacingAndGlyphs">4),</text>
<text x="397.1" y="464.6" textLength="21.7" lengthAdjust="spacingAndGlyphs">the</text>
<text x="422.4" y="464.6" textLength="51.4" lengthAdjust="spacingAndGlyphs">number</text>
<text x="477.3" y="464.6" textLength="13.3" lengthAdjust="spacingAndGlyphs">of</text>
<text x="494.2" y="464.6" textLength="66.2" lengthAdjust="spacingAndGlyphs">emotional</text>
<text x="564.0" y="464.6" textLength="58.6" lengthAdjust="spacingAndGlyphs">language</text>
<text x="626.2" y="464.6" textLength="53.9" lengthAdjust="spacingAndGlyphs">features</text>
<text x="683.7" y="464.6" textLength="32.7" lengthAdjust="spacingAndGlyphs">stays</text>
<text x="720.0" y="464.6" textLength="38.1" lengthAdjust="spacingAndGlyphs">about</text>
<text x="761.7" y="464.6" textLength="21.7" lengthAdjust="spacingAndGlyphs">the</text>
<text x="212.3" y="493.7" textLength="38.6" lengthAdjust="spacingAndGlyphs">same.</text>
<text x="254.5" y="493.7" textLength="12.4" lengthAdjust="spacingAndGlyphs">In</text>
<text x="270.5" y="493.7" textLength="21.7" lengthAdjust="spacingAndGlyphs">the</text>
<text x="295.8" y="493.7" textLength="28.6" lengthAdjust="spacingAndGlyphs">case</text>
<text x="327.9" y="493.7" textLength="13.3" lengthAdjust="spacingAndGlyphs">of</text>
<text x="344.8" y="493.7" textLength="39.3" lengthAdjust="spacingAndGlyphs">target</text>
<text x="387.8" y="493.7" textLength="132.2" lengthAdjust="spacingAndGlyphs">language-orientated</text>
<text x="523.5" y="493.7" textLength="80.5" lengthAdjust="spacingAndGlyphs">translations,</text>
<text x="607.6" y="493.7" textLength="21.7" lengthAdjust="spacingAndGlyphs">the</text>
<text x="632.9" y="493.7" textLength="51.4" lengthAdjust="spacingAndGlyphs">number</text>
<text x="687.9" y="493.7" textLength="13.3" lengthAdjust="spacingAndGlyphs">of</text>
<text x="704.8" y="493.7" textLength="66.2" lengthAdjust="spacingAndGlyphs">emotional</text>
<text x="212.3" y="522.7" textLength="58.8" lengthAdjust="spacingAndGlyphs">language</text>
<text x="274.7" y="522.7" textLength="54.0" lengthAdjust="spacingAndGlyphs">features</text>
<text x="332.3" y="522.7" textLength="26.8" lengthAdjust="spacingAndGlyphs">that</text>
<text x="362.7" y="522.7" textLength="45.6" lengthAdjust="spacingAndGlyphs">appear</text>
<text x="412.0" y="522.7" textLength="12.1" lengthAdjust="spacingAndGlyphs">in</text>
<text x="427.7" y="522.7" textLength="21.7" lengthAdjust="spacingAndGlyphs">the</text>
<text x="453.0" y="522.7" textLength="45.7" lengthAdjust="spacingAndGlyphs">English</text>
<text x="502.3" y="522.7" textLength="48.6" lengthAdjust="spacingAndGlyphs">original</text>
<text x="554.5" y="522.7" textLength="9.9" lengthAdjust="spacingAndGlyphs">is</text>
<text x="568.1" y="522.7" textLength="22.2" lengthAdjust="spacingAndGlyphs">not</text>
<text x="593.9" y="522.7" textLength="7.7" lengthAdjust="spacingAndGlyphs">a</text>
<text x="605.1" y="522.7" textLength="60.1" lengthAdjust="spacingAndGlyphs">predictor</text>
<text x="668.9" y="522.7" textLength="13.3" lengthAdjust="spacingAndGlyphs">of</text>
<text x="685.8" y="522.7" textLength="21.7" lengthAdjust="spacingAndGlyphs">the</text>
<text x="711.1" y="522.7" textLength="51.5" lengthAdjust="spacingAndGlyphs">number</text>
<text x="766.2" y="522.7" textLength="26.8" lengthAdjust="spacingAndGlyphs">that</text>
<text x="212.3" y="551.9" textLength="22.4" lengthAdjust="spacingAndGlyphs">will</text>
<text x="238.3" y="551.9" textLength="16.3" lengthAdjust="spacingAndGlyphs">be</text>
<text x="258.2" y="551.9" textLength="30.9" lengthAdjust="spacingAndGlyphs">used</text>
<text x="292.8" y="551.9" textLength="12.0" lengthAdjust="spacingAndGlyphs">in</text>
<text x="308.4" y="551.9" textLength="21.7" lengthAdjust="spacingAndGlyphs">the</text>
<text x="333.7" y="551.9" textLength="38.7" lengthAdjust="spacingAndGlyphs">Dutch</text>
<text x="376.0" y="551.9" textLength="74.3" lengthAdjust="spacingAndGlyphs">translation.</text>
<text x="453.9" y="551.9" textLength="21.3" lengthAdjust="spacingAndGlyphs">For</text>
<text x="478.8" y="551.9" textLength="58.3" lengthAdjust="spacingAndGlyphs">instance,</text>
<text x="540.8" y="551.9" textLength="12.0" lengthAdjust="spacingAndGlyphs">in</text>
<text x="556.4" y="551.9" textLength="94.3" lengthAdjust="spacingAndGlyphs">advertisement</text>
<text x="654.3" y="551.9" textLength="12.1" lengthAdjust="spacingAndGlyphs">3,</text>
<text x="670.0" y="551.9" textLength="35.2" lengthAdjust="spacingAndGlyphs">three</text>
<text x="708.8" y="551.9" textLength="66.2" lengthAdjust="spacingAndGlyphs">emotional</text>
<text x="212.3" y="581" textLength="58.7" lengthAdjust="spacingAndGlyphs">language</text>
<text x="274.6" y="581" textLength="53.9" lengthAdjust="spacingAndGlyphs">features</text>
<text x="332.1" y="581" textLength="32.9" lengthAdjust="spacingAndGlyphs">were</text>
<text x="368.6" y="581" textLength="38.4" lengthAdjust="spacingAndGlyphs">found</text>
<text x="410.6" y="581" textLength="12.0" lengthAdjust="spacingAndGlyphs">in</text>
<text x="426.3" y="581" textLength="21.7" lengthAdjust="spacingAndGlyphs">the</text>
<text x="451.6" y="581" textLength="45.6" lengthAdjust="spacingAndGlyphs">English</text>
<text x="500.8" y="581" textLength="52.5" lengthAdjust="spacingAndGlyphs">original,</text>
<text x="556.9" y="581" textLength="35.1" lengthAdjust="spacingAndGlyphs">while</text>
<text x="595.6" y="581" textLength="12.0" lengthAdjust="spacingAndGlyphs">in</text>
<text x="611.2" y="581" textLength="21.7" lengthAdjust="spacingAndGlyphs">the</text>
<text x="636.5" y="581" textLength="38.7" lengthAdjust="spacingAndGlyphs">Dutch</text>
<text x="678.8" y="581" textLength="77.7" lengthAdjust="spacingAndGlyphs">counterpart</text>
<text x="760.1" y="581" textLength="35.2" lengthAdjust="spacingAndGlyphs">there</text>
<text x="212.3" y="612" textLength="32.9" lengthAdjust="spacingAndGlyphs">were</text>
<text x="248.9" y="612" textLength="21.1" lengthAdjust="spacingAndGlyphs">six;</text>
<text x="273.6" y="612" textLength="12.1" lengthAdjust="spacingAndGlyphs">in</text>
<text x="289.3" y="612" textLength="94.6" lengthAdjust="spacingAndGlyphs">advertisement</text>
<text x="387.5" y="612" textLength="12.1" lengthAdjust="spacingAndGlyphs">6,</text>
<text x="403.2" y="612" textLength="37.8" lengthAdjust="spacingAndGlyphs">seven</text>
<text x="444.7" y="612" textLength="54.1" lengthAdjust="spacingAndGlyphs">features</text>
<text x="502.4" y="612" textLength="45.7" lengthAdjust="spacingAndGlyphs">appear</text>
<text x="551.7" y="612" textLength="12.1" lengthAdjust="spacingAndGlyphs">in</text>
<text x="567.3" y="612" textLength="49.8" lengthAdjust="spacingAndGlyphs">English,</text>
<text x="620.7" y="612" textLength="28.9" lengthAdjust="spacingAndGlyphs">with</text>
<text x="653.2" y="612" textLength="27.8" lengthAdjust="spacingAndGlyphs">only</text>
<text x="684.6" y="612" textLength="35.3" lengthAdjust="spacingAndGlyphs">three</text>
<text x="723.5" y="612" textLength="12.1" lengthAdjust="spacingAndGlyphs">in</text>
<text x="739.2" y="612" textLength="42.8" lengthAdjust="spacingAndGlyphs">Dutch.</text></svg></div>
<!-- vertical scrollbar -->
<div class="a" style="left:997px;top:110px;width:19px;height:511px;background:#f0f0f0"></div>
<div class="a" style="left:997px;top:121px;width:1px;height:483px;background:#fff"></div>
<div class="a" style="left:1014px;top:121px;width:1px;height:500px;background:#d8d8d8"></div>
<div class="a" style="left:1015px;top:109px;width:1px;height:513px;background:#fff"></div>
<div class="a" style="left:1014px;top:109px;width:1px;height:12px;background:#fff"></div>
<!-- split box -->
<div class="a" style="left:997px;top:110px;width:17px;height:11px;background:#f0f0f0;border-top:1px solid #696969;border-right:1px solid #696969;border-bottom:1px solid #696969"></div>
<div class="a" style="left:997px;top:111px;width:16px;height:9px;border-top:1px solid #fff;border-left:1px solid #fff;border-right:1px solid #a0a0a0;border-bottom:1px solid #a0a0a0"></div>
<div class="a" style="left:998px;top:138px;width:15px;height:162px;background:#cdcdcd"></div>
<svg style="left:0;top:0" width="1024" height="650">
 <path d="M1002 133 L1005.5 129.5 L1009 133" fill="none" stroke="#606060" stroke-width="1.8"/>
 <path d="M1002 543 L1005.5 546.5 L1009 543" fill="none" stroke="#606060" stroke-width="1.8"/>
 <path d="M1001.5 562 L1004.5 559 L1007.5 562 Z M1001.5 565.5 L1004.5 562.5 L1007.5 565.5 Z" fill="#000"/>
 <defs><radialGradient id="ball" cx="0.4" cy="0.35" r="0.7"><stop offset="0" stop-color="#f0f0f0"/><stop offset="1" stop-color="#707070"/></radialGradient></defs>
 <circle cx="1004.5" cy="578.2" r="3.4" fill="url(#ball)" stroke="#000" stroke-width="1.3"/>
 <path d="M1001.5 592.5 L1004.5 595.5 L1007.5 592.5 Z M1001.5 596 L1004.5 599 L1007.5 596 Z" fill="#000"/>
</svg>
<!-- view bar + horizontal scrollbar -->
<div class="a" style="left:10px;top:604px;width:987px;height:17px;background:#f0f0f0"></div>
<div class="a" style="left:112px;top:605px;width:867px;height:15px;background:#cdcdcd"></div>
<div class="a" style="left:44px;top:604px;width:17px;height:17px;border:1px solid #0a246a;background:#ffc06c"></div>
<svg style="left:0;top:0" width="1024" height="650">
 <g fill="#000">
  <rect x="14" y="609" width="8" height="1"/><rect x="14" y="611" width="8" height="1"/><rect x="14" y="613" width="8" height="1"/><rect x="14" y="615" width="8" height="1"/>
 </g>
 <rect x="31.5" y="609.5" width="6" height="5" fill="#fff" stroke="#000"/>
 <circle cx="37" cy="614.5" r="2" fill="#1a2a6a"/>
 <rect x="48.5" y="609.5" width="7" height="6" fill="#fff" stroke="#000"/>
 <rect x="50" y="611" width="4" height="1" fill="#000"/><rect x="50" y="613" width="4" height="1" fill="#000"/>
 <g fill="#000">
  <rect x="65" y="609" width="2" height="1"/><rect x="68" y="609" width="5" height="1"/>
  <rect x="67" y="611" width="6" height="1"/><rect x="65" y="613" width="1" height="1"/><rect x="68" y="613" width="5" height="1"/>
  <rect x="65" y="615" width="1" height="1"/><rect x="67" y="615" width="6" height="1"/>
 </g>
 <path d="M81.5 609.5 H85 L85.5 610 L86 609.5 H89.5 V615.5 H86.5 L85.5 616.5 L84.5 615.5 H81.5 Z" fill="#fff" stroke="#000"/>
 <path d="M85.5 610 V615.5" stroke="#000"/>
 <path d="M105 609.5 L101 612.75 L105 616" fill="none" stroke="#606060" stroke-width="1.8"/>
 <path d="M987 609.5 L991 612.75 L987 616" fill="none" stroke="#606060" stroke-width="1.8"/>
</svg>
<!-- status bar -->
<div class="a" style="left:8px;top:621px;width:1008px;height:1px;background:#fff"></div>
<div class="a" style="left:8px;top:622px;width:1008px;height:21px;background:#f0f0f0"></div>
<div class="a" style="left:8px;top:643px;width:1008px;height:1px;background:#dadada"></div>
<div class="a" style="left:1016px;top:621px;width:1px;height:23px;background:#d0d0d0"></div>
<div class="a" style="left:7px;top:622px;width:1px;height:22px;background:#d8d8d8"></div>
<div class="a" style="left:13px;top:625px;width:211px;height:18px;border:1px solid #d8d8d8;border-right-color:#fff;border-bottom-color:#fff;box-shadow:inset -1px -1px 0 #d0d0d0"></div>
<div class="a" style="left:230px;top:625px;width:178px;height:18px;border:1px solid #d8d8d8;border-right-color:#fff;border-bottom-color:#fff;box-shadow:inset -1px -1px 0 #d0d0d0"></div>
<div class="a" style="left:414px;top:625px;width:27px;height:18px;border:1px solid #d8d8d8;border-right-color:#fff;border-bottom-color:#fff;box-shadow:inset -1px -1px 0 #d0d0d0"></div>
<div class="a" style="left:447px;top:625px;width:27px;height:18px;border:1px solid #d8d8d8;border-right-color:#fff;border-bottom-color:#fff;box-shadow:inset -1px -1px 0 #d0d0d0"></div>
<div class="a" style="left:480px;top:625px;width:26px;height:18px;border:1px solid #d8d8d8;border-right-color:#fff;border-bottom-color:#fff;box-shadow:inset -1px -1px 0 #d0d0d0"></div>
<div class="a" style="left:511px;top:625px;width:28px;height:18px;border:1px solid #d8d8d8;border-right-color:#fff;border-bottom-color:#fff;box-shadow:inset -1px -1px 0 #d0d0d0"></div>
<div class="a" style="left:546px;top:625px;width:74px;height:18px;border:1px solid #d8d8d8;border-right-color:#fff;border-bottom-color:#fff;box-shadow:inset -1px -1px 0 #d0d0d0"></div>
<div class="a" style="left:626px;top:625px;width:46px;height:18px;border:1px solid #d8d8d8;border-right-color:#fff;border-bottom-color:#fff;box-shadow:inset -1px -1px 0 #d0d0d0"></div>
<div class="a" style="left:678px;top:625px;width:36px;height:18px;border:1px solid #d8d8d8;border-right-color:#fff;border-bottom-color:#fff;box-shadow:inset -1px -1px 0 #d0d0d0"></div>
<div class="a" style="left:720px;top:625px;width:26px;height:18px;border:1px solid #d8d8d8;border-right-color:#fff;border-bottom-color:#fff;box-shadow:inset -1px -1px 0 #d0d0d0"></div>
<div class="a" style="left:751px;top:625px;width:31px;height:18px;border:1px solid #d8d8d8;border-right-color:#fff;border-bottom-color:#fff;box-shadow:inset -1px -1px 0 #d0d0d0"></div>
<svg style="left:0;top:0" width="1024" height="650" font-family="Liberation Sans" font-size="12.3" fill="#000">
 <text x="18.4" y="638" textLength="40.1" lengthAdjust="spacingAndGlyphs">Page 1</text>
 <text x="94.6" y="638" textLength="33.0" lengthAdjust="spacingAndGlyphs">Sec 1</text>
 <text x="179.2" y="638" textLength="18.2" lengthAdjust="spacingAndGlyphs">1/1</text>
 <text x="232.6" y="638" textLength="43.4" lengthAdjust="spacingAndGlyphs">At 1.1"</text>
 <text x="304.4" y="638" textLength="25.9" lengthAdjust="spacingAndGlyphs">Ln 1</text>
 <text x="352.7" y="638" textLength="36.8" lengthAdjust="spacingAndGlyphs">Col 26</text>
 <g fill="#a0a0a0">
  <text x="417.4" y="638" textLength="22.1" lengthAdjust="spacingAndGlyphs">REC</text>
  <text x="449.2" y="638" textLength="22.8" lengthAdjust="spacingAndGlyphs">TRK</text>
  <text x="480.2" y="638" textLength="23.1" lengthAdjust="spacingAndGlyphs">EXT</text>
  <text x="513.2" y="638" textLength="24.1" lengthAdjust="spacingAndGlyphs">OVR</text>
 </g>
 <text x="546.5" y="638" textLength="69.5" lengthAdjust="spacingAndGlyphs">English (U.K.</text>
 <g fill="none" stroke="#000" stroke-width="1">
  <path d="M637.5 628 V637.5 H654.5 V628"/>
  <path d="M639.5 636 V627.5 Q639.5 626.5 640.5 626.5 H644 Q645.5 626.5 645.5 628 V635.5 H640 Z" fill="#fff"/>
  <path d="M647.5 635.5 V627.5 H652.5 V635.5 Z" fill="#fff"/>
  <path d="M638 639 H654"/>
 </g>
 <path d="M641 629 H644 M641 630.5 H644 M641 632 H644 M648.5 629.5 H651 M648.5 631 H651 M648.5 632.5 H651" stroke="#9aa4ac" stroke-width="0.8"/>
 <path d="M648.5 630 L656.5 636.5 M657 628 L649.5 637.5" stroke="#a00000" stroke-width="1.6"/>
 <g fill="#a4a8ac"><rect x="1010" y="634" width="2" height="2"/><rect x="1007" y="637" width="2" height="2"/><rect x="1010" y="637" width="2" height="2"/><rect x="1004" y="640" width="2" height="2"/><rect x="1007" y="640" width="2" height="2"/><rect x="1010" y="640" width="2" height="2"/></g>
</svg>
<!-- cursor highlight -->
<div class="a" style="left:85px;top:278px;width:50px;height:50px;border-radius:50%;background:rgba(255,255,0,0.5)"></div>
<svg style="left:0;top:0" width="1024" height="650"><defs><clipPath id="cc"><circle cx="110" cy="303" r="25"/></clipPath></defs><rect x="117" y="270" width="1" height="70" fill="#a04800" clip-path="url(#cc)"/></svg>
<svg style="left:0;top:0" width="1024" height="650">
 <rect x="108" y="301" width="3" height="3" fill="#8a94a8"/>
 <path d="M110.5 303.5 V319 L114 315.5 L116.5 321 L118.5 320 L116 314.5 H121 Z" fill="#fff" stroke="#000" stroke-width="1"/>
</svg>
</body></html>
